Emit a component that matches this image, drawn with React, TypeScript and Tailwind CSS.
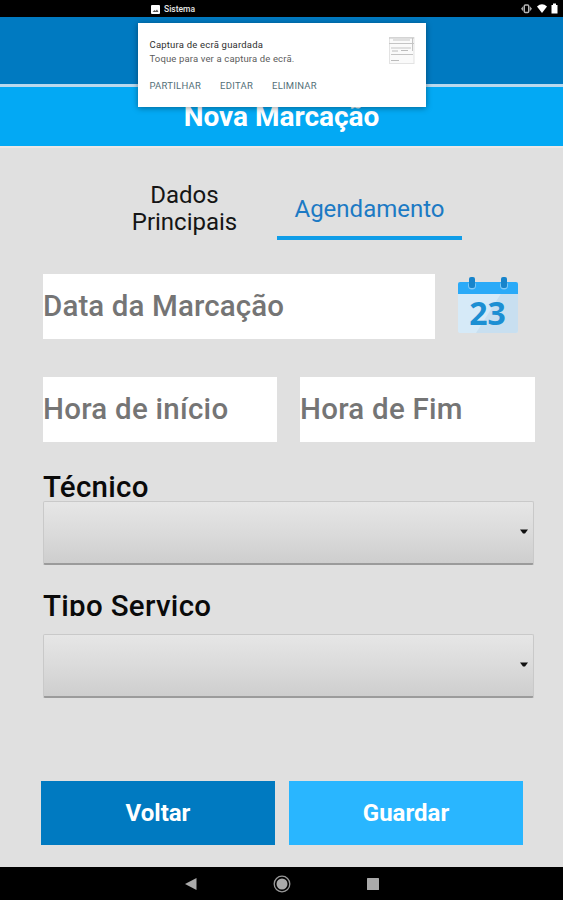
import { useState } from 'react'

const tabs = [
  { id: 'dados', label: 'Dados Principais' },
  { id: 'agenda', label: 'Agendamento' },
]

/* ================= Icons ================= */
const CalendarIcon = () => (
  <svg width="62" height="58" viewBox="0 0 62 58">
    <rect x="0" y="12" width="60" height="45" rx="2" fill="#d6eaf8" />
    <path d="M44 16H60V55a2 2 0 0 1-2 2H18Z" fill="#c8dff0" />
    <path d="M2 6H58a2 2 0 0 1 2 2V18H0V8a2 2 0 0 1 2-2Z" fill="#2aaaf8" />
    <circle cx="14" cy="9.500" r="4" fill="#7fc9f7" />
    <circle cx="46" cy="9.500" r="4" fill="#7fc9f7" />
    <rect x="11" y="1" width="6" height="11" rx="2" fill="#1784cb" />
    <rect x="43" y="1" width="6" height="11" rx="2" fill="#1784cb" />
    <text
      x="29.500"
      y="48.500"
      textAnchor="middle"
      fill="#1c8fd3"
      className="font-['Open_Sans',sans-serif] text-[32px] font-bold"
    >
      23
    </text>
  </svg>
)

const StatusIcons = () => (
  <svg width="44" height="17" viewBox="0 0 44 17">
    <rect x="5.300" y="5" width="4.400" height="7.500" rx="1" fill="none" stroke="#b5b5b5" strokeWidth="1.400" />
    <path d="M4.300 6v5.500L2 8.750ZM10.700 6v5.500L13 8.750Z" fill="#a8a8a8" />
    <path d="M18 6.500Q23 2 28 6.500L23 13Z" fill="#fff" />
    <path d="M32.500 5H34V3.500h3V5h1.500v8.500h-6Z" fill="#fff" />
  </svg>
)

const ThumbnailIcon = () => (
  <svg width="26" height="27" viewBox="0 0 26 27">
    <rect x="0.500" y="0.500" width="24.500" height="26" fill="#fafafa" stroke="#e3e3e3" />
    <path d="M0 1h25M4 3h17M0 6.500h25M2 11h20M2 17.500h22" stroke="#c4c4c4" />
    <path d="M3 14h6M12 13.500h7M2 23.500h8" stroke="#bcbcbc" />
    <path d="M23.500 1v13" stroke="#c4c4c4" />
  </svg>
)

/* ================= Form pieces ================= */
const Field = ({ placeholder, className }: { placeholder: string; className: string }) => (
  <input
    placeholder={placeholder}
    className={`h-[65px] bg-white pb-[2px] text-[29.500px] font-medium text-[#757575] outline-none placeholder:text-[#757575] placeholder:opacity-100 ${className}`}
  />
)

const Spinner = () => (
  <button className="flex h-[64px] w-[491px] items-center justify-end rounded-[2px] border border-b-2 border-[#c9c9c9] border-b-[#9b9b9b] bg-linear-to-b from-[#e6e6e6] via-[#dbdbdb] to-[#cecece] pr-[5px] pb-[2px]">
    <svg width="8" height="5" viewBox="0 0 8 5">
      <path d="M0 0.500H8L5 4.500H3Z" fill="#111" />
    </svg>
  </button>
)

const Notification = () => (
  <div className="absolute top-[23px] left-[138px] flex h-[84px] w-[288px] flex-col bg-white px-[11.500px] pt-[15px] text-[9.500px] shadow-[0_1px_6px_rgba(0,0,0,0.4)]">
    <div className="flex justify-between">
      <div className="leading-[14px]">
        <p className="tracking-[0.200px] text-[#303030]">Captura de ecrã guardada</p>
        <p className="tracking-[0.140px] text-[#5c5c5c]">Toque para ver a captura de ecrã.</p>
      </div>
      <div className="-mt-px">
        <ThumbnailIcon />
      </div>
    </div>
    <div className="mt-[13px] flex gap-[19px] leading-[14px] tracking-[0.250px] text-[#537078]">
      <button>PARTILHAR</button>
      <button>EDITAR</button>
      <button>ELIMINAR</button>
    </div>
  </div>
)

const App = () => {
  const [activeTab, setActiveTab] = useState('agenda')

  return (
    <div className="relative flex h-[900px] w-[563px] flex-col overflow-hidden bg-[#e0e0e0] font-[Roboto,sans-serif]">
      {/* ===== Status bar ===== */}
      <div className="flex h-[17px] shrink-0 items-center justify-between bg-black pl-[151px]">
        <div className="flex items-center gap-[4px] pt-[2px] text-[8.500px] font-medium text-[#e8e8e8]">
          <svg width="9" height="9" viewBox="0 0 9 9">
            <rect width="9" height="9" rx="1" fill="#fff" />
            <path d="M1.500 7 3.500 5l1 1L6 4.500 7.500 7Z" fill="#555" />
          </svg>
          Sistema
        </div>
        <StatusIcons />
      </div>

      {/* ===== Header ===== */}
      <header className="shrink-0 text-center">
        <div className="h-[67px] bg-[#007ac1]" />
        <div className="h-[62px] border-t-[3px] border-[#b9d9ee] bg-[#03a9f4]">
          <h1 className="pt-[13px] text-[28px] leading-[33px] font-bold text-white">Nova Marcação</h1>
        </div>
        <div className="h-[2px] bg-[#ebe8e6]" />
      </header>

      {/* ===== Tabs ===== */}
      <nav className="mt-[30px] flex h-[62px] shrink-0 pl-[92px]">
        {tabs.map((tab) => (
          <button
            key={tab.id}
            onClick={() => setActiveTab(tab.id)}
            className={`flex w-[185px] items-center justify-center border-b-4 px-9 pt-[4px] text-[24px] leading-[27px] ${
              activeTab === tab.id ? 'border-[#109de8] text-[#1c7ac4]' : 'border-transparent text-[#151515]'
            }`}
          >
            {tab.label}
          </button>
        ))}
      </nav>

      {/* ===== Form ===== */}
      <main className="mt-[34px] flex flex-1 flex-col pl-[43px]">
        <div className="flex gap-[23px]">
          <Field placeholder="Data da Marcação" className="w-[392px] tracking-[0.120px]" />
          <button className="mt-[2px] h-[58px]">
            <CalendarIcon />
          </button>
        </div>
        <div className="mt-[38px] flex gap-[23px]">
          <Field placeholder="Hora de início" className="w-[234px] tracking-[0.250px]" />
          <Field placeholder="Hora de Fim" className="w-[235px] tracking-[0.250px]" />
        </div>

        <label className="mt-[28px] h-[31px] text-[29.500px] leading-[35px] font-medium tracking-[0.250px] text-[#0a0a0a]">
          Técnico
        </label>
        <Spinner />
        <label className="mt-[24px] h-[27px] overflow-hidden text-[29.500px] leading-[35px] font-medium tracking-[0.300px] text-[#0a0a0a]">
          Tipo Serviço
        </label>
        <div className="mt-[18px]">
          <Spinner />
        </div>

        <div className="mt-[83px] -ml-[2px] flex gap-[14px] text-[24px] font-bold text-white">
          <button className="h-[64px] w-[234px] bg-[#007ac1]">Voltar</button>
          <button className="h-[64px] w-[234px] bg-[#29b6ff]">Guardar</button>
        </div>
      </main>

      {/* ===== Android navigation ===== */}
      <footer className="flex h-[33px] shrink-0 items-center justify-center gap-[76px] bg-black">
        <svg width="12" height="14" viewBox="0 0 12 14">
          <path d="M0 7 11.500 1V13Z" fill="#aaa" />
        </svg>
        <svg width="18" height="18" viewBox="0 0 18 18">
          <circle cx="9" cy="9" r="7.800" fill="none" stroke="#999" strokeWidth="1.300" />
          <circle cx="9" cy="9" r="5.500" fill="#aaa" />
        </svg>
        <svg width="12" height="12" viewBox="0 0 12 12">
          <rect width="12" height="12" rx="0.500" fill="#aaa" />
        </svg>
      </footer>

      <Notification />
    </div>
  )
}

export default App
